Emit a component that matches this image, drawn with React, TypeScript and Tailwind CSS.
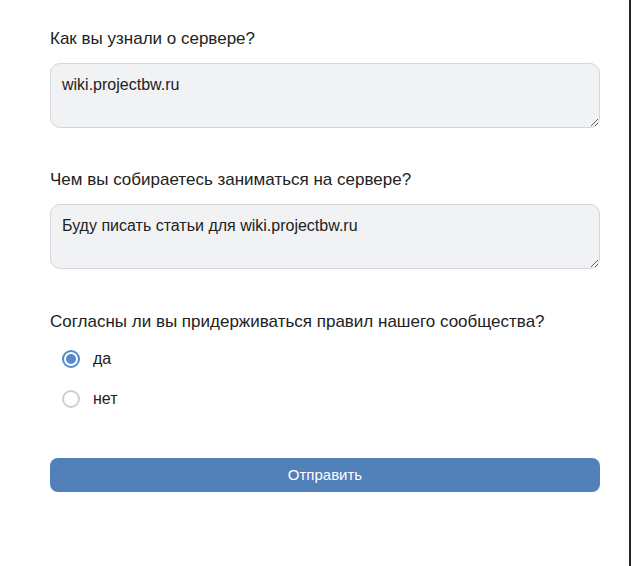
import { useState } from "react";

const Radio = ({ checked, label, onClick }: { checked: boolean; label: string; onClick: () => void }) => (
    <label className="flex items-center cursor-pointer h-[20px]" onClick={onClick}>
        <span
            className={
                checked
                    ? "w-[18px] h-[18px] rounded-full border-2 border-[#5589d0] flex items-center justify-center ml-[12px]"
                    : "w-[18px] h-[18px] rounded-full border-2 border-[#cfcfcf] flex items-center justify-center ml-[12px]"
            }
        >
            {checked && <span className="w-[10px] h-[10px] rounded-full bg-[#5589d0]" />}
        </span>
        <span className="ml-[13px] text-[16px] text-[#222]">{label}</span>
    </label>
);

const App = () => {
    const [agree, setAgree] = useState("yes");

    return (
        <div
            className="min-h-[566px] bg-white border-r-2 border-[#262626] text-[#222]"
            style={{ fontFamily: '"Liberation Sans", Arial, sans-serif' }}
        >
            <form className="w-[550px] ml-[50px] pt-[30px] flex flex-col" onSubmit={(e) => e.preventDefault()}>
                <div className="text-[17px] leading-[18px]">Как вы узнали о сервере?</div>
                <textarea
                    className="mt-[15px] h-[65px] w-full rounded-[10px] border border-[#d3d5d9] bg-[#f1f2f4] px-[11px] py-[12px] text-[16px] leading-[18px] outline-none"
                    defaultValue="wiki.projectbw.ru"
                />

                <div className="mt-[43px] text-[17px] leading-[18px]">Чем вы собираетесь заниматься на сервере?</div>
                <textarea
                    className="mt-[15px] h-[65px] w-full rounded-[10px] border border-[#d3d5d9] bg-[#f1f2f4] px-[11px] py-[12px] text-[16px] leading-[18px] outline-none"
                    defaultValue="Буду писать статьи для wiki.projectbw.ru"
                />

                <div className="mt-[44px] text-[17px] leading-[18px]">Согласны ли вы придерживаться правил нашего сообщества?</div>
                <div className="mt-[18px] flex flex-col gap-[20px]">
                    <Radio checked={agree === "yes"} label="да" onClick={() => setAgree("yes")} />
                    <Radio checked={agree === "no"} label="нет" onClick={() => setAgree("no")} />
                </div>

                <button
                    type="submit"
                    className="mt-[49px] h-[34px] w-full rounded-[8px] bg-[#5181b8] text-[15px] text-white"
                >
                    Отправить
                </button>
            </form>
        </div>
    );
};

export default App;
